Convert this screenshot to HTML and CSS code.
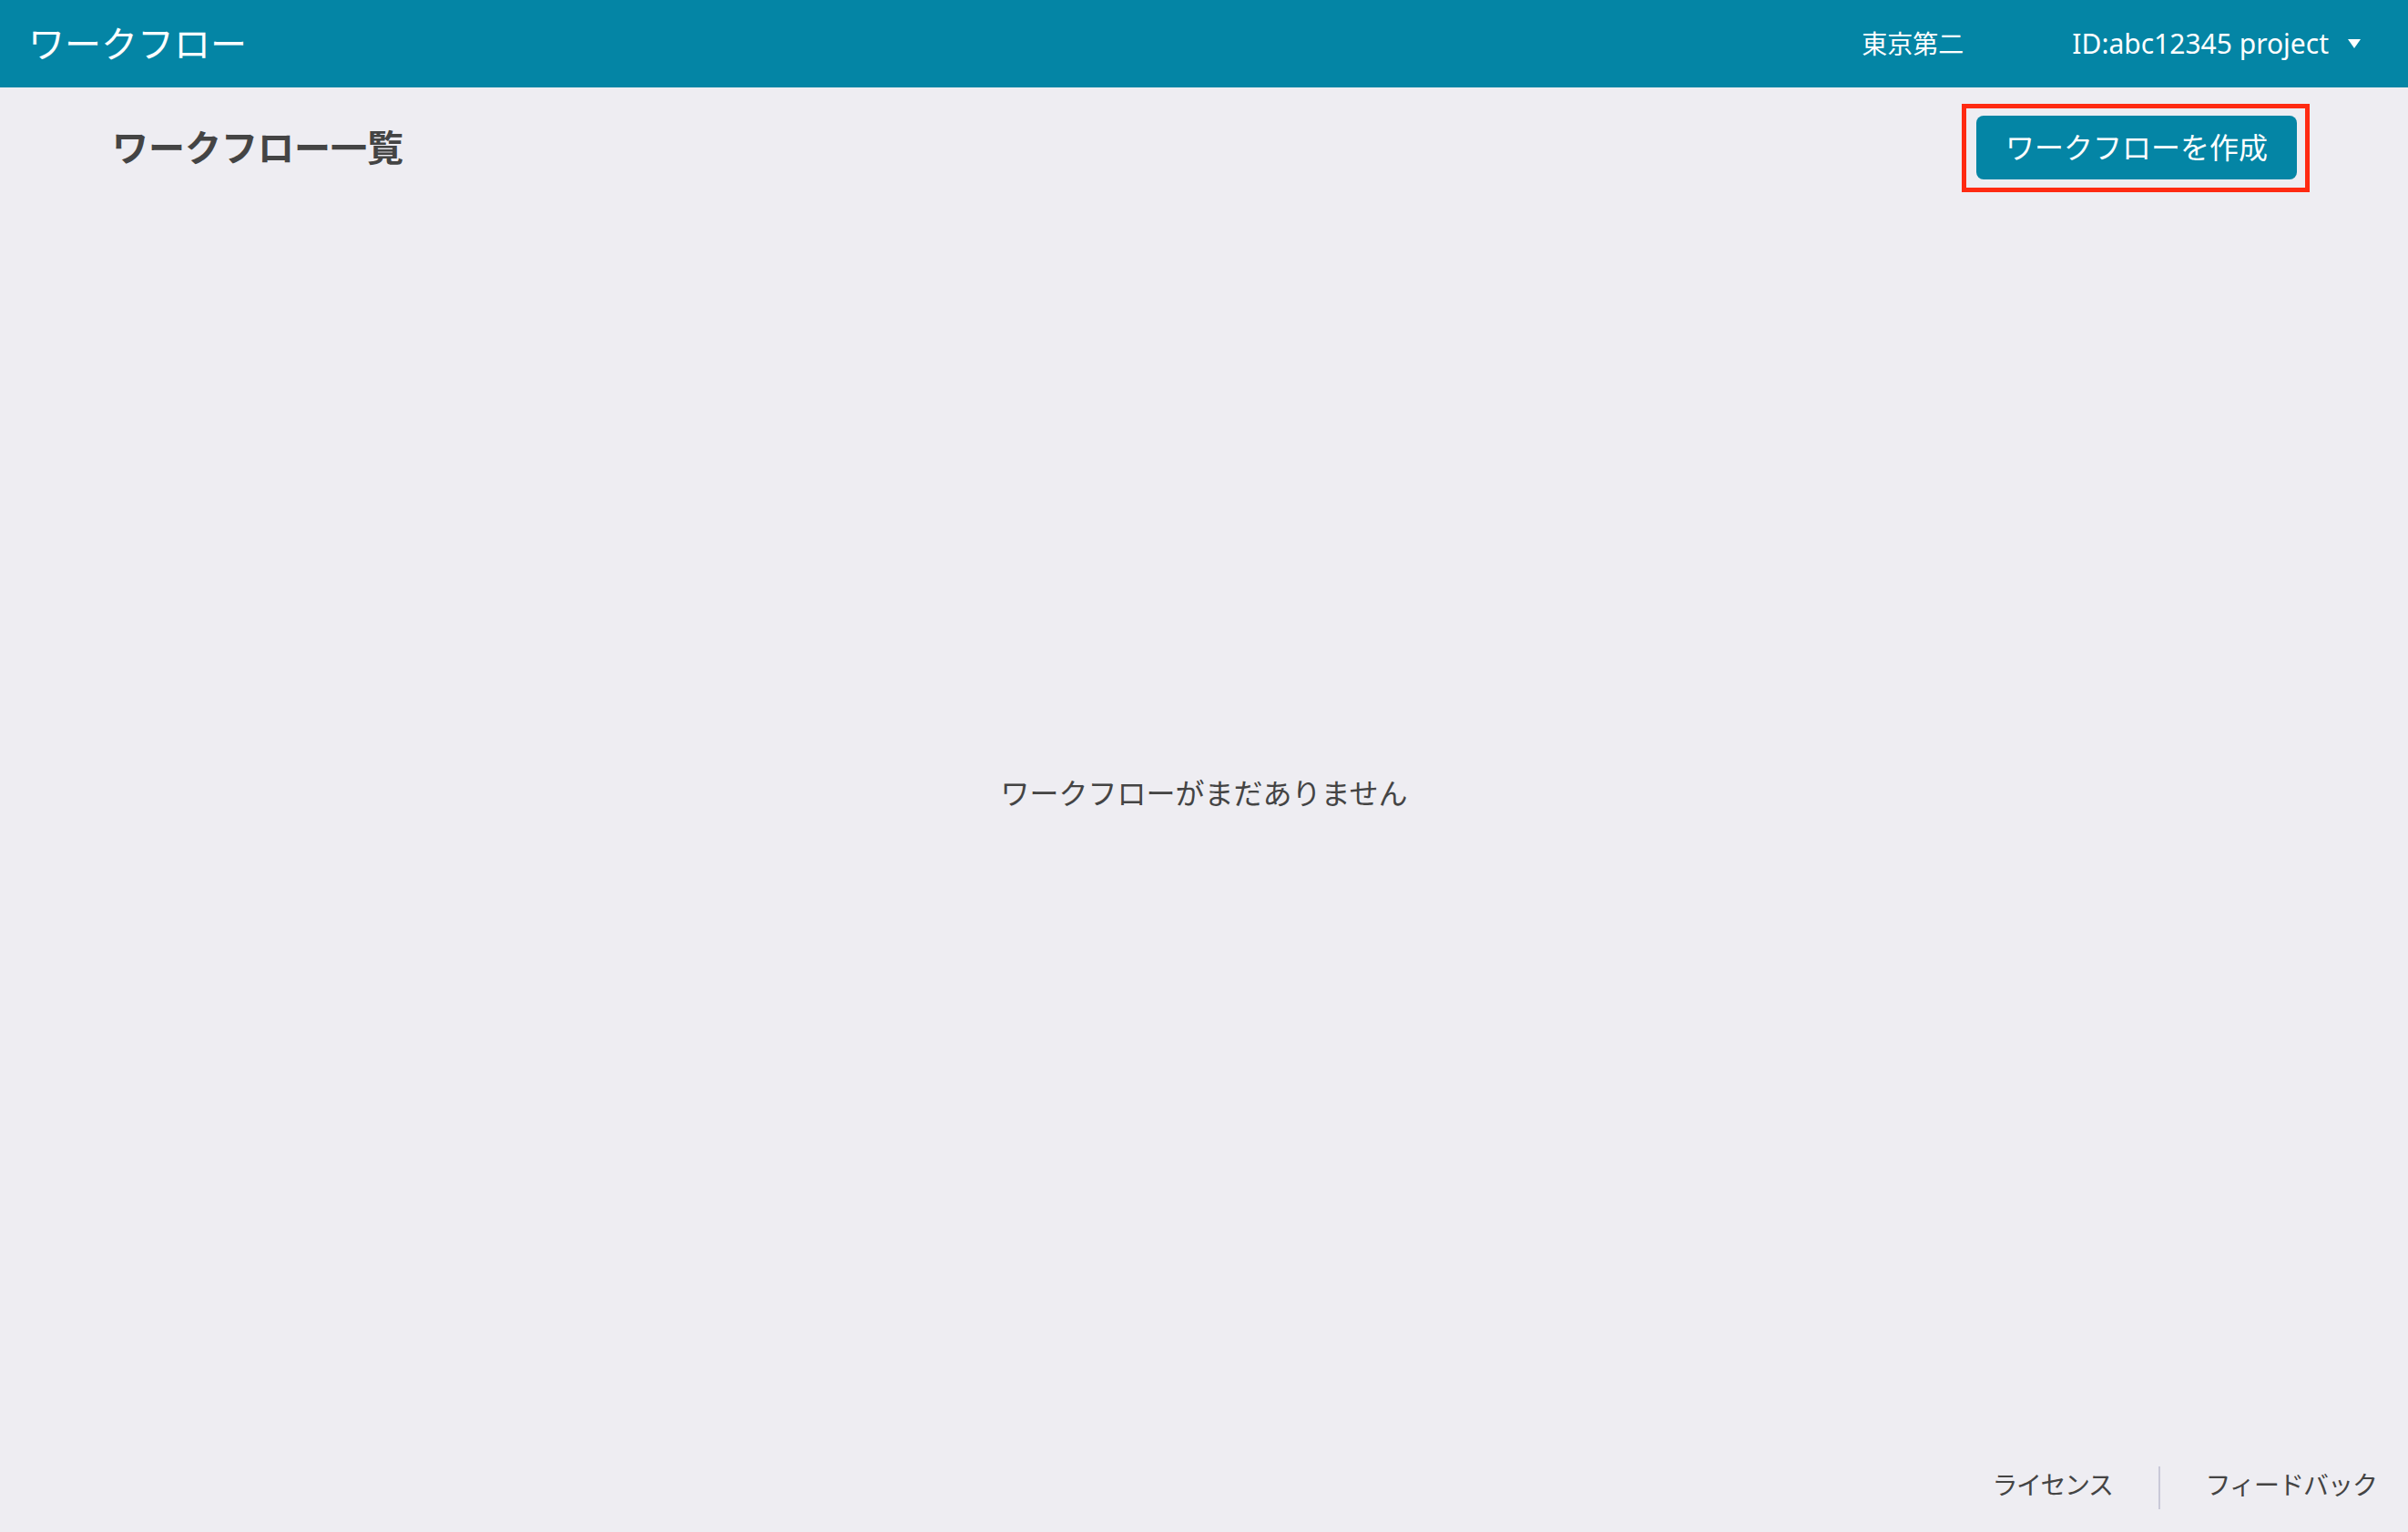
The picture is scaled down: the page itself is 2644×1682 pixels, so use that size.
FILE: index.html
```html
<!DOCTYPE html>
<html lang="ja">
<head>
<meta charset="utf-8">
<title>ワークフロー</title>
<link rel="stylesheet" href="styles.css">
</head>
<body>
<div class="page">
  <header class="topbar">
    <div class="app-title">ワークフロー</div>
    <div class="topbar-right">
      <span class="org">東京第二</span>
      <span class="project">ID:abc12345 project
        <svg class="caret" width="14" height="10" viewBox="0 0 14 10"><path d="M0 0 H14 L7 10 Z" fill="#fff"/></svg>
      </span>
    </div>
  </header>

  <div class="toolbar">
    <h1 class="page-title">ワークフロー一覧</h1>
    <div class="highlight">
      <button class="btn-primary">ワークフローを作成</button>
    </div>
  </div>

  <div class="empty">ワークフローがまだありません</div>

  <footer class="footer">
    <a class="footer-link">ライセンス</a>
    <span class="footer-sep"></span>
    <a class="footer-link">フィードバック</a>
  </footer>
</div>
</body>
</html>
```

FILE: styles.css
```css
html, body {
  margin: 0;
  padding: 0;
}
body {
  background: #eeedf2;
  font-family: "Noto Sans CJK JP", "Noto Sans", sans-serif;
  color: #444444;
}
.page {
  min-height: 100vh;
  display: flex;
  flex-direction: column;
}
.topbar {
  height: 96px;
  background: #0485a5;
  color: #ffffff;
  display: flex;
  align-items: center;
  justify-content: space-between;
  padding: 0 52px 0 31px;
  box-sizing: border-box;
}
.app-title {
  font-size: 40px;
  line-height: 1;
  font-weight: 400;
  padding-bottom: 4px;
}
.topbar-right {
  display: flex;
  align-items: center;
  gap: 119px;
}
.org {
  font-size: 28px;
  line-height: 1;
  padding-bottom: 3px;
}
.project {
  font-family: "Noto Sans", "Noto Sans CJK JP", sans-serif;
  font-size: 30px;
  line-height: 1;
  display: flex;
  align-items: center;
  gap: 21px;
}
.caret {
  display: block;
}
.toolbar {
  display: flex;
  align-items: center;
  justify-content: space-between;
  padding: 18px 108px 0 123px;
}
.page-title {
  margin: 0;
  font-size: 40px;
  font-weight: 700;
  line-height: 1;
  color: #444444;
  padding-bottom: 6px;
}
.highlight {
  border: 5px solid #ff2a12;
  padding: 8px 9px 9px 11px;
  display: flex;
}
.btn-primary {
  height: 70px;
  padding: 0 32px 5px;
  border: none;
  border-radius: 8px;
  background: #0485a5;
  color: #ffffff;
  font-family: "Noto Sans CJK JP", sans-serif;
  font-size: 32px;
  line-height: 1;
  cursor: pointer;
}
.empty {
  padding-top: 634px;
  text-align: center;
  font-size: 32px;
  line-height: 48px;
  color: #444444;
}
.footer {
  margin-top: auto;
  display: flex;
  justify-content: flex-end;
  align-items: center;
  padding: 0 34px 25px 0;
}
.footer-link {
  font-size: 28px;
  line-height: 1;
  color: #444444;
  padding-bottom: 10px;
  letter-spacing: -1px;
}
.footer-link:first-child {
  letter-spacing: -1.5px;
}
.footer-sep {
  width: 2px;
  height: 47px;
  background: #c9c9d8;
  margin: 0 50px;
}
```
